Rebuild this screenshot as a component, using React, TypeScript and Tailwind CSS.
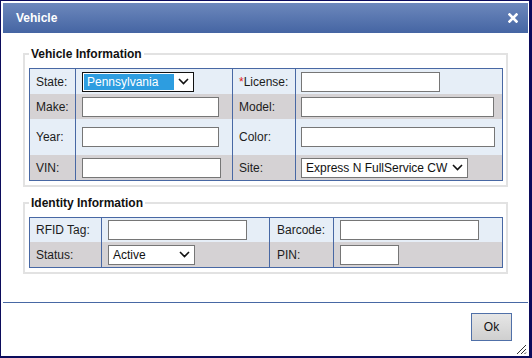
import React from "react";

const Chevron = () => (
  <svg width="11" height="7" viewBox="0 0 11 7" className="shrink-0">
    <path d="M1 1l4.5 4.5L10 1" fill="none" stroke="#111" strokeWidth="1.6" />
  </svg>
);

function TextBox({ w }: { w: string }) {
  return <div className={`h-[20px] ${w} border border-[#767676] bg-white`} />;
}

function Select({ value, w, focused }: { value: string; w: string; focused?: boolean }) {
  return (
    <div
      className={`h-[20px] ${w} border ${focused ? "border-[#111]" : "border-[#767676]"} bg-white flex items-center pl-[1px] pr-[4px] gap-[4px]`}
    >
      <span
        className={`flex-1 h-[16px] flex items-center text-[12px] pl-[3px] whitespace-nowrap ${
          focused ? "bg-[#2d9de0] text-white" : "text-[#111]"
        }`}
      >
        {value}
      </span>
      <Chevron />
    </div>
  );
}

function Label({ children }: { children: React.ReactNode }) {
  return <span className="pl-[6px] text-[12px] text-[#1c1c1c]">{children}</span>;
}

interface Row {
  h: string;
  bg: string;
  cells: React.ReactNode[];
}

function InfoTable({ cols, rows }: { cols: string[]; rows: Row[] }) {
  return (
    <div className="border border-[#4868a4] flex flex-col">
      {rows.map((r, i) => (
        <div key={i} className={`flex ${r.h} ${r.bg}`}>
          {r.cells.map((c, j) => (
            <div key={j} className={`${cols[j]} flex items-center ${j > 0 ? "border-l border-[#4868a4]" : ""}`}>
              {c}
            </div>
          ))}
        </div>
      ))}
    </div>
  );
}

const LIGHT = "bg-[#e6eef7]";
const GRAY = "bg-[#d5d2d4]";

export default function App() {
  return (
    <div className="w-[532px] h-[358px] bg-white border-[#0c0c5c] border-l border-t border-r-[3px] border-b-2 pl-[2px] pt-[2px] pr-[1px] flex flex-col font-['Liberation_Sans',Arial,sans-serif] text-[12px] text-[#1c1c1c]">
      <div className="h-[30px] shrink-0 bg-linear-to-b from-[#6d88bc] to-[#4565a3] flex items-center justify-between pl-[13px] pr-[10px]">
        <span className="text-white font-bold text-[12px]">Vehicle</span>
        <svg width="10" height="10" viewBox="0 0 10 10">
          <path d="M1.5 1.5l7 7M8.5 1.5l-7 7" stroke="#fff" strokeWidth="2.6" strokeLinecap="square" />
        </svg>
      </div>

      <fieldset className="mt-[14px] mx-[20px] border-2 border-[#e2e2e2] pl-[4px] pr-[3px] pt-[7px] pb-[4px]">
        <legend className="px-[2px] font-bold text-[12px] leading-[14px] text-[#111]">Vehicle Information</legend>
        <InfoTable
          cols={["w-[45px]", "w-[157px] pl-[6px]", "w-[63px]", "w-[207px] pl-[5px]"]}
          rows={[
            {
              h: "h-[25px]",
              bg: LIGHT,
              cells: [
                <Label>State:</Label>,
                <Select value="Pennsylvania" w="w-[112px]" focused />,
                <Label>
                  <span className="text-[#e02020]">*</span>License:
                </Label>,
                <TextBox w="w-[139px]" />,
              ],
            },
            {
              h: "h-[25px]",
              bg: GRAY,
              cells: [<Label>Make:</Label>, <TextBox w="w-[137px]" />, <Label>Model:</Label>, <TextBox w="w-[193px]" />],
            },
            {
              h: "h-[36px]",
              bg: LIGHT,
              cells: [<Label>Year:</Label>, <TextBox w="w-[137px]" />, <Label>Color:</Label>, <TextBox w="w-[194px]" />],
            },
            {
              h: "h-[25px]",
              bg: GRAY,
              cells: [
                <Label>VIN:</Label>,
                <TextBox w="w-[139px]" />,
                <Label>Site:</Label>,
                <Select value="Express N FullService CW" w="w-[167px]" />,
              ],
            },
          ]}
        />
      </fieldset>

      <fieldset className="mt-[9px] mx-[20px] border-2 border-[#e2e2e2] pl-[4px] pr-[3px] pt-[7px] pb-[4px]">
        <legend className="px-[2px] font-bold text-[12px] leading-[14px] text-[#111]">Identity Information</legend>
        <InfoTable
          cols={["w-[71px]", "w-[168px] pl-[6px]", "w-[64px] pl-[1px]", "w-[168px] pl-[6px]"]}
          rows={[
            {
              h: "h-[24px]",
              bg: LIGHT,
              cells: [<Label>RFID Tag:</Label>, <TextBox w="w-[139px]" />, <Label>Barcode:</Label>, <TextBox w="w-[139px]" />],
            },
            {
              h: "h-[25px]",
              bg: GRAY,
              cells: [<Label>Status:</Label>, <Select value="Active" w="w-[87px]" />, <Label>PIN:</Label>, <TextBox w="w-[59px]" />],
            },
          ]}
        />
      </fieldset>

      <div className="mt-[28px] h-px bg-[#4868a4]" />

      <div className="flex-1 flex justify-end items-start pt-[10px] pr-[16px] relative">
        <button className="w-[41px] h-[28px] border border-[#5070a8] bg-linear-to-b from-[#e6e6e6] to-[#cfcfcf] text-[12px] text-[#111]">
          Ok
        </button>
        <svg width="12" height="12" viewBox="0 0 12 12" className="absolute right-[1px] bottom-[1px]">
          <path d="M11 2L2 11M11 6L6 11M11 9.5L9.5 11" stroke="#333" strokeWidth="1" />
        </svg>
      </div>
    </div>
  );
}
